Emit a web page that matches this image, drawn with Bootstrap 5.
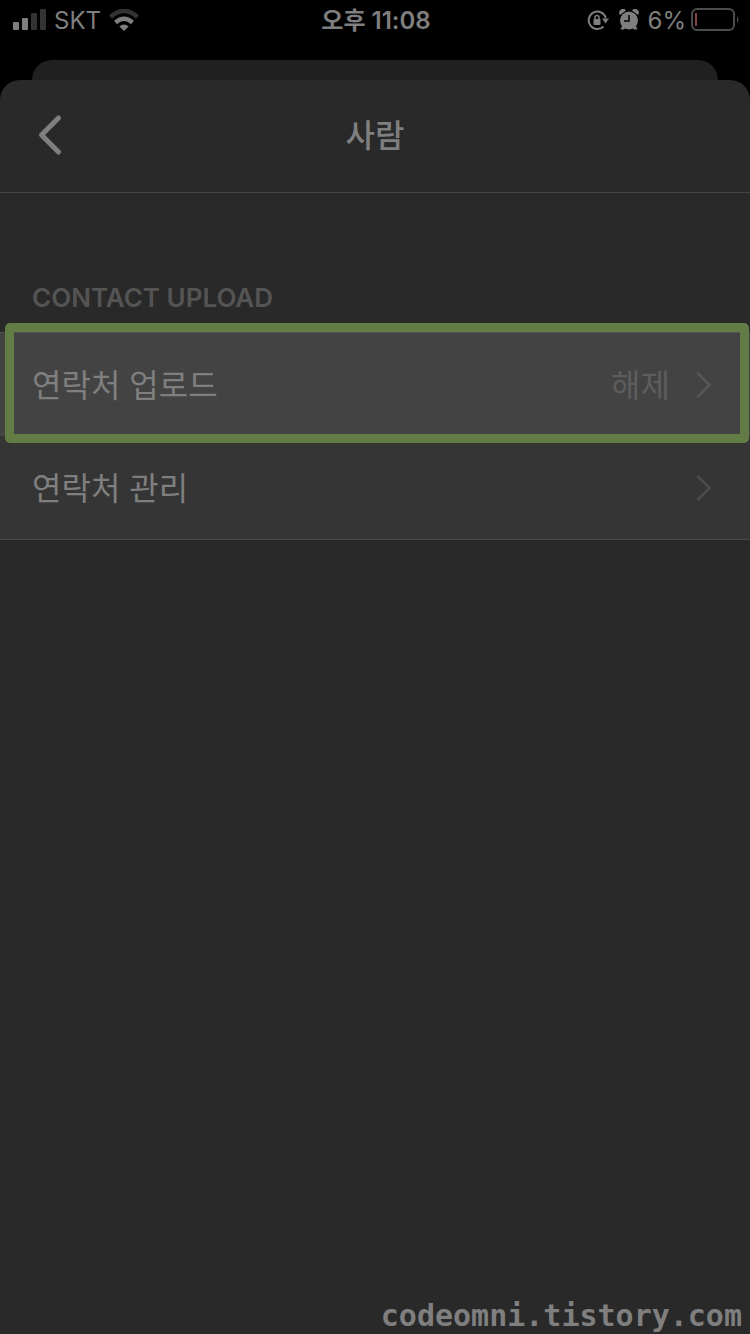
<!DOCTYPE html>
<html lang="ko">
<head>
<meta charset="utf-8">
<meta name="viewport" content="width=device-width, initial-scale=1">
<title>사람</title>
<link href="https://cdn.jsdelivr.net/npm/bootstrap@5.3.0/dist/css/bootstrap.min.css" rel="stylesheet">
<style>
  body { background: #000; color: #7f7f7f; font-family: Inter, "Noto Sans CJK KR", sans-serif; }
  svg { display: block; flex: none; }
  .status-bar { height: 40px; font-size: 24px; line-height: 40px; padding: 0 11px 0 13px; }
  .status-bar > div { flex: 1 1 0; }
  .status-bar span { padding-top: 2px; }
  .status-time { font-weight: 600; }
  .carrier { margin: 0 7px; }
  .alarm-icon { margin: 0 9px 0 10px; }
  .sheet-behind { height: 20px; margin: 20px 32px 0; background: #202020; border-radius: 20px 20px 0 0; }
  .sheet { background: #292929; border-radius: 20px 20px 0 0; }
  .sheet-header { height: 113px; padding: 0 32px 2px; border-bottom: 1px solid #444; }
  .sheet-header > * { flex: 1 1 0; }
  .sheet-title { font-size: 32px; line-height: 48px; font-weight: 500; padding-top: 2px; }
  .back-btn { width: 36px; height: 48px; }
  .section-label { font-size: 26px; line-height: 32px; font-weight: 600; color: #545454; padding: 89px 32px 18px; }
  .setting-list { border-top: 1px solid #535353; border-bottom: 1px solid #484848; }
  .setting-row { height: 103px; padding: 0 36px 0 32px; background: #353535; color: #7f7f7f; font-size: 32px; line-height: 48px; }
  .setting-row.picked { background: #434343; }
  .setting-row span { padding-top: 2px; }
  .picked-frame { inset: -10px 1px -7px 5px; border: 9px solid #637b45; border-radius: 5px; pointer-events: none; }
  .setting-value { color: #5d5d5d; }
  .watermark { font-family: "DejaVu Sans Mono", monospace; font-weight: 700; font-size: 30px; line-height: 36px; padding-right: 8px; }
</style>
</head>
<body class="min-vh-100 d-flex flex-column">
  <div class="status-bar d-flex align-items-center">
    <div class="d-flex align-items-center">
      <svg width="34" height="22" viewBox="0 0 34 22" aria-hidden="true">
        <rect x="0" y="13" width="6" height="8" rx="1" fill="#7f7f7f"/>
        <rect x="9" y="9" width="6" height="12" rx="1" fill="#7f7f7f"/>
        <rect x="18" y="4" width="6" height="17" rx="1" fill="#333"/>
        <rect x="27" y="0" width="6" height="21" rx="1" fill="#333"/>
      </svg>
      <span class="carrier">SKT</span>
      <svg width="32" height="22" viewBox="0 0 32 22" fill="none" aria-hidden="true">
        <path d="M2.500 8Q16-4 29.500 8" stroke="#333" stroke-width="4.500"/>
        <path d="M7.500 13.500Q16 6 24.500 13.500" stroke="#7f7f7f" stroke-width="4.500"/>
        <path d="M11.300 17.500Q16 13.500 20.700 17.500L16 22Z" fill="#7f7f7f"/>
      </svg>
    </div>
    <span class="status-time">오후 11:08</span>
    <div class="d-flex align-items-center justify-content-end">
      <svg width="22" height="22" viewBox="0 0 22 22" fill="none" aria-hidden="true">
        <path d="M18.800 9A8.700 8.700 0 1 0 16.500 17.500" stroke="#7f7f7f" stroke-width="2"/>
        <path d="M15 9.500H22L18.500 14.500Z" fill="#7f7f7f"/>
        <rect x="6.500" y="10" width="7" height="6" rx="1" fill="#7f7f7f"/>
        <path d="M8 10V8.500a2 2 0 0 1 4 0V10" stroke="#7f7f7f" stroke-width="1.500"/>
      </svg>
      <svg class="alarm-icon" width="20" height="22" viewBox="1 0 20 22" aria-hidden="true">
        <g fill="#7f7f7f">
          <circle cx="11" cy="11.500" r="9"/>
          <path d="M2 6A3.500 3.500 0 0 1 8 1.500ZM20 6A3.500 3.500 0 0 0 14 1.500Z"/>
          <path d="M4 17L2.500 20.500H6L8 18ZM18 17L19.500 20.500H16L14 18Z"/>
        </g>
        <path d="M11 6V12H6" fill="none" stroke="#000" stroke-width="1.500"/>
      </svg>
      <span>6%</span>
      <svg width="53" height="24" viewBox="-3 0 53 24" aria-hidden="true">
        <rect x="3" y="1" width="42" height="21" rx="5" fill="none" stroke="#4c4c4c" stroke-width="2"/>
        <rect x="6" y="5" width="2" height="13" rx="1" fill="#7f4a3b"/>
        <path d="M48 8Q51 11.500 48 15Z" fill="#4c4c4c"/>
      </svg>
    </div>
  </div>
  <div class="sheet-behind"></div>

  <main class="sheet flex-grow-1 d-flex flex-column">
    <header class="sheet-header d-flex align-items-center">
      <div>
        <button type="button" class="back-btn btn border-0 p-0" aria-label="뒤로">
          <svg width="36" height="44" viewBox="0 0 36 44" fill="none" aria-hidden="true">
            <path d="M26.500 5L9.500 22L26.500 39" stroke="#7f7f7f" stroke-width="5" stroke-linecap="round" stroke-linejoin="round"/>
          </svg>
        </button>
      </div>
      <h1 class="sheet-title text-center m-0">사람</h1>
      <div></div>
    </header>

    <h2 class="section-label m-0">CONTACT UPLOAD</h2>
    <nav class="setting-list">
      <a href="#upload" class="setting-row picked position-relative d-flex align-items-center text-decoration-none">
        <span class="flex-grow-1">연락처 업로드</span>
        <span class="setting-value me-4">해제</span>
        <svg width="20" height="30" viewBox="0 0 20 30" fill="none" aria-hidden="true">
          <path d="M4 3.500L15.500 15L4 26.500" stroke="#555" stroke-width="3" stroke-linecap="round"/>
        </svg>
        <i class="picked-frame position-absolute m-0"></i>
      </a>
      <a href="#manage" class="setting-row d-flex align-items-center text-decoration-none">
        <span class="flex-grow-1">연락처 관리</span>
        <svg width="20" height="30" viewBox="0 0 20 30" fill="none" aria-hidden="true">
          <path d="M4 3.500L15.500 15L4 26.500" stroke="#4a4a4a" stroke-width="3" stroke-linecap="round"/>
        </svg>
      </a>
    </nav>

    <footer class="watermark mt-auto text-end">codeomni.tistory.com</footer>
  </main>
<script src="https://cdn.jsdelivr.net/npm/bootstrap@5.3.0/dist/js/bootstrap.bundle.min.js"></script>
</body>
</html>
